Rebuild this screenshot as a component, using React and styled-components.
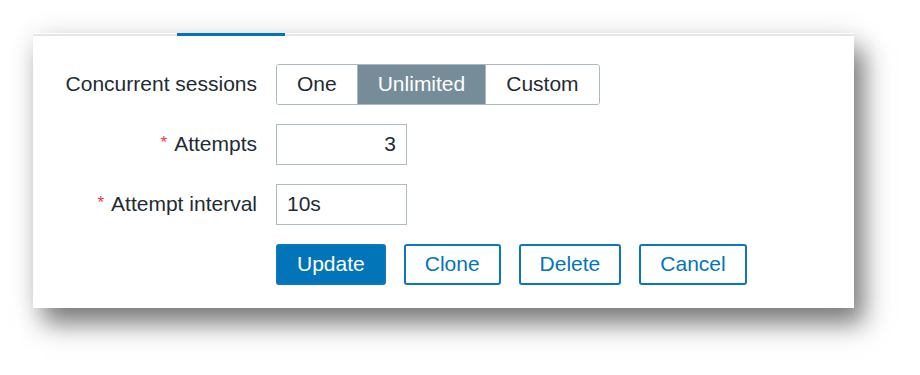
import styled, { createGlobalStyle } from "styled-components";

const Global = createGlobalStyle`
    body {
        margin: 0;
        background: #ffffff;
        font-family: "Liberation Sans", Arial, sans-serif;
    }
`;

export default function App(){
    return(
        <>
        <Global />
        <PAGE>
            <PANEL>
                <RULE>
                    <INDICATOR />
                </RULE>
                <FORM>
                    <LABEL>Concurrent sessions</LABEL>
                    <SEGMENTS>
                        <SEGMENT>One</SEGMENT>
                        <SEGMENT active>Unlimited</SEGMENT>
                        <SEGMENT>Custom</SEGMENT>
                    </SEGMENTS>

                    <LABEL><STAR>*</STAR>Attempts</LABEL>
                    <INPUT defaultValue="3" align="right" />

                    <LABEL><STAR>*</STAR>Attempt interval</LABEL>
                    <INPUT defaultValue="10s" align="left" />

                    <span />
                    <BUTTONS>
                        <BUTTON primary>Update</BUTTON>
                        <BUTTON>Clone</BUTTON>
                        <BUTTON>Delete</BUTTON>
                        <BUTTON>Cancel</BUTTON>
                    </BUTTONS>
                </FORM>
            </PANEL>
        </PAGE>
        </>
    );
}

const PAGE = styled.div`
    width: 920px;
    height: 375px;
    padding: 33px 0 0 33px;
    box-sizing: border-box;
`;
const PANEL = styled.div`
    width: 821px;
    height: 275px;
    background: #ffffff;
    box-sizing: border-box;
    box-shadow: 10px 16px 24px rgba(0, 0, 0, 0.5), 0 0 26px rgba(0, 0, 0, 0.08);
`;
const RULE = styled.div`
    height: 3px;
    display: flex;
    align-items: flex-end;
    background: linear-gradient(to bottom, #ffffff 0, #ffffff 1px, #e6e6e6 1px);
`;
const INDICATOR = styled.div`
    margin-left: 144px;
    width: 108px;
    height: 3px;
    background: #0275b8;
`;
const FORM = styled.div`
    display: grid;
    grid-template-columns: 224px 1fr;
    column-gap: 19px;
    row-gap: 19px;
    align-items: center;
    padding-top: 27.5px;
`;
const LABEL = styled.div`
    text-align: right;
    font-size: 21px;
    color: #1f2c33;
`;
const STAR = styled.span`
    color: #e4393c;
    font-size: 17px;
    vertical-align: 3px;
    margin-right: 7px;
`;
const SEGMENTS = styled.div`
    display: flex;
    width: fit-content;
    height: 41px;
    border: 1px solid #a9b8c1;
    border-radius: 3px;
    box-sizing: border-box;
    overflow: hidden;
`;
const SEGMENT = styled.div`
    display: flex;
    align-items: center;
    padding: 0 20px;
    font-size: 21px;
    color: ${p => p.active ? "#ffffff" : "#1f2c33"};
    background: ${p => p.active ? "#768d99" : "#ffffff"};
    & + & {
        border-left: 1px solid #a9b8c1;
    }
`;
const INPUT = styled.input`
    width: 131px;
    height: 41px;
    box-sizing: border-box;
    border: 1px solid #acbbc4;
    border-radius: 0;
    padding: 0 10px;
    font-family: "Liberation Sans", Arial, sans-serif;
    font-size: 21px;
    color: #1f2c33;
    text-align: ${p => p.align};
    outline: none;
`;
const BUTTONS = styled.div`
    display: flex;
    gap: 18px;
`;
const BUTTON = styled.button`
    height: 41px;
    padding: 0 19px;
    box-sizing: border-box;
    border: 2px solid #0b78ba;
    border-radius: 3px;
    font-family: "Liberation Sans", Arial, sans-serif;
    font-size: 21px;
    color: ${p => p.primary ? "#ffffff" : "#0275b8"};
    background: ${p => p.primary ? "#0275b8" : "#ffffff"};
    cursor: pointer;
`;
